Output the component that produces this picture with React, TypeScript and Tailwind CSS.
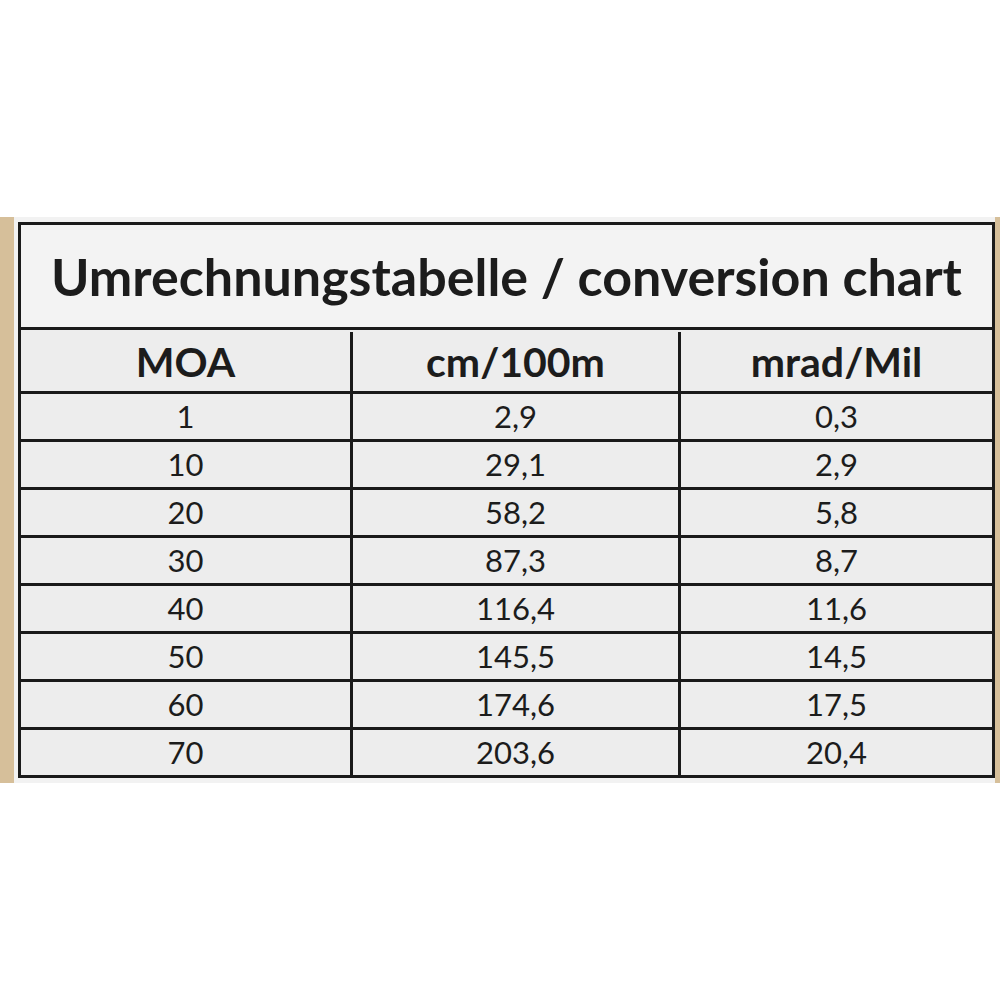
const rows = [
  ["1", "2,9", "0,3"],
  ["10", "29,1", "2,9"],
  ["20", "58,2", "5,8"],
  ["30", "87,3", "8,7"],
  ["40", "116,4", "11,6"],
  ["50", "145,5", "14,5"],
  ["60", "174,6", "17,5"],
  ["70", "203,6", "20,4"],
];

const Row = ({ cells, header }: { cells: string[]; header?: boolean }) => (
  <div
    className={`flex border-b-[3px] border-[#1a1a1a] ${header ? "h-[64px] pt-[2px] text-[41px] font-bold" : "h-[48px] text-[31px]"}`}
  >
    <div className="flex w-[332px] items-center justify-center border-r-[3px] border-[#1a1a1a]">
      {cells[0]}
    </div>
    <div className="flex w-[328px] items-center justify-center border-r-[3px] border-[#1a1a1a]">
      {cells[1]}
    </div>
    <div className="flex flex-1 items-center justify-center">{cells[2]}</div>
  </div>
);

export default function App() {
  return (
    <div
      className="h-[1000px] w-[1000px] bg-white text-[#1c1c1c]"
      style={{ fontFamily: "Lato, 'Open Sans', sans-serif" }}
    >
      <div className="h-[217px]" />
      <div className="flex h-[566px] bg-[#d6bf9a]">
        <div className="w-[14px]" />
        <div className="flex-1 bg-[#f2f2f2] pl-[4px] pt-[5px]">
          <div className="border-x-[3px] border-t-[3px] border-[#1a1a1a] bg-[#ededed]">
            <div className="flex h-[105px] items-center justify-center border-b-[3px] border-[#1a1a1a] bg-[#f3f3f3] text-[52px] font-bold">
              Umrechnungstabelle / conversion chart
            </div>
            <Row cells={["MOA", "cm/100m", "mrad/Mil"]} header />
            {rows.map((r) => (
              <Row key={r[0]} cells={r} />
            ))}
          </div>
        </div>
        <div className="w-[5px]" />
      </div>
    </div>
  );
}
